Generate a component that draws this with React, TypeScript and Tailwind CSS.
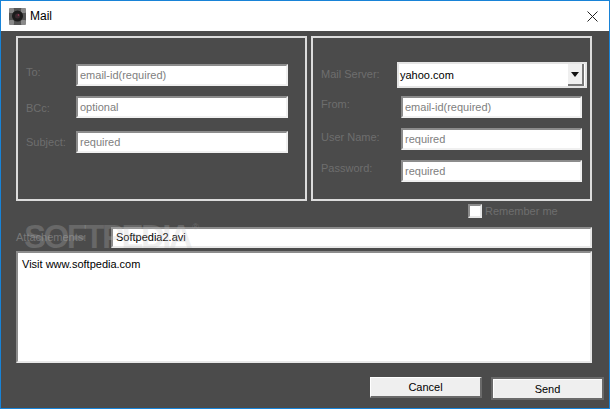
import React from 'react'

const font = "font-['Liberation_Sans',Arial,sans-serif]"

const Field = ({ label, value, className, labelClass }: { label: string; value: string; className: string; labelClass: string }) => (
  <div className={`flex items-center ${className}`}>
    <div className={`text-[11px] leading-4 text-[#6e6e6e] whitespace-nowrap ${labelClass}`}>{label}</div>
    <div className="h-[22px] flex-1 flex items-center bg-white border-2 border-t-[#8c8c8c] border-l-[#8c8c8c] border-r-[#f0f0f0] border-b-[#f0f0f0] pl-[2px] pt-[1px] text-[11px] text-[#808080]">
      {value}
    </div>
  </div>
)

const App = () => {
  return (
    <div className={`relative w-[610px] h-[409px] overflow-hidden flex flex-col bg-white border border-[#1883d7] ${font}`}>
      <div className="h-[30px] shrink-0 flex items-center pl-[8px] pr-[11px] justify-between">
        <div className="flex items-center">
          <svg width="17" height="17" viewBox="0 0 17 17">
            <rect width="17" height="17" rx="3" fill="#555" />
            <rect x="0" y="0" width="5" height="5" fill="#8a8a8a" rx="1" />
            <rect x="12" y="0" width="5" height="5" fill="#8a8a8a" rx="1" />
            <rect x="0" y="12" width="5" height="5" fill="#8a8a8a" rx="1" />
            <rect x="12" y="12" width="5" height="5" fill="#8a8a8a" rx="1" />
            <circle cx="8.5" cy="8" r="5.5" fill="#1c1c1c" />
            <circle cx="8.5" cy="8" r="2.5" fill="#3a2a30" />
            <circle cx="9.5" cy="7" r="0.8" fill="#b04060" />
          </svg>
          <span className="ml-[4px] text-[12px] text-black">Mail</span>
        </div>
        <svg width="11" height="11" viewBox="0 0 11 11" stroke="#222" strokeWidth="1" fill="none">
          <path d="M0.5 0.5 L10.5 10.5 M10.5 0.5 L0.5 10.5" />
        </svg>
      </div>

      <div className="flex-1 flex flex-col bg-[#4b4b4b] pl-[15px] pr-[4px] pt-[5px]">
        <div className="flex gap-[4px]">
          <div className="w-[291px] h-[165px] border-2 border-[#dcdcdc] pt-[26px] pl-[8px] pr-[17px]">
            <Field label="To:" value="email-id(required)" className="" labelClass="w-[50px] pb-[6px]" />
            <Field label="BCc:" value="optional" className="mt-[10px]" labelClass="w-[50px] pt-[2px]" />
            <Field label="Subject:" value="required" className="mt-[13px]" labelClass="w-[50px]" />
          </div>
          <div className="w-[281px] h-[165px] border-2 border-[#dcdcdc] pt-[24px] pl-[8px] pr-[2px]">
            <div className="flex items-center">
              <div className="w-[76px] text-[11px] leading-4 text-[#6e6e6e] whitespace-nowrap pb-[2px]">Mail Server:</div>
              <div className="w-[190px] h-[26px] flex items-center bg-white border-2 border-[#e4e4e4] pl-[1px] pr-[1px]">
                <span className="flex-1 text-[11px] text-black">yahoo.com</span>
                <div className="w-[16px] h-[22px] flex items-center justify-center bg-[#efefef] border-r-2 border-b-2 border-[#777]">
                  <svg width="8" height="5" viewBox="0 0 8 5"><path d="M0 0 H8 L4 5 Z" fill="#111" /></svg>
                </div>
              </div>
            </div>
            <div className="w-[261px]">
              <Field label="From:" value="email-id(required)" className="mt-[8px]" labelClass="w-[80px] pb-[6px]" />
              <Field label="User Name:" value="required" className="mt-[10px]" labelClass="w-[80px] pb-[4px]" />
              <Field label="Password:" value="required" className="mt-[10px]" labelClass="w-[80px] pb-[6px]" />
            </div>
          </div>
        </div>

        <div className="h-[26px] flex items-start pl-[452px] pt-[3px]">
          <div className="w-[14px] h-[14px] bg-white border-2 border-t-[#8c8c8c] border-l-[#8c8c8c] border-r-[#e8e8e8] border-b-[#e8e8e8]" />
          <span className="ml-[3px] text-[11px] leading-[14px] text-[#6e6e6e]">Remember me</span>
        </div>

        <div className="flex items-center h-[21px]">
          <div className="w-[95px] text-[11px] text-[#777]">Attachements:</div>
          <div className="w-[481px] h-[21px] flex items-center bg-white border-2 border-t-[#8c8c8c] border-l-[#8c8c8c] border-r-[#e8e8e8] border-b-[#e8e8e8] pl-[3px] text-[11px] text-black">
            Softpedia2.avi
          </div>
        </div>

        <div className="w-[576px] h-[112px] mt-[3px] bg-white border-2 border-t-[#8c8c8c] border-l-[#8c8c8c] border-r-[#e8e8e8] border-b-[#e8e8e8] pl-[4px] pt-[3px] text-[11px] leading-4 text-black">
          Visit www.softpedia.com
        </div>

        <div className="flex items-start mt-[14px] pl-[354px] gap-[9px]">
          <button className="w-[112px] h-[21px] flex items-center justify-center pt-[1px] bg-[#efefef] border-t border-l border-white border-r-2 border-b-2 border-r-[#6a6a6a] border-b-[#6a6a6a] text-[11px] text-black">Cancel</button>
          <button className="w-[113px] h-[23px] flex items-center justify-center pt-[1px] bg-[#efefef] border-2 border-[#6a6a6a] shadow-[inset_1px_1px_0_#ffffff] text-[11px] text-black">Send</button>
        </div>
      </div>

      <div className="absolute left-[23px] top-[219px] flex items-start text-[#c0c0c0]/25 pointer-events-none">
        <span className="text-[33px] leading-[34px] font-bold tracking-[-2.5px]">SOFTPEDIA</span>
        <span className="text-[9px] leading-3 mt-[1px] ml-[2px]">®</span>
      </div>
    </div>
  )
}

export default App
